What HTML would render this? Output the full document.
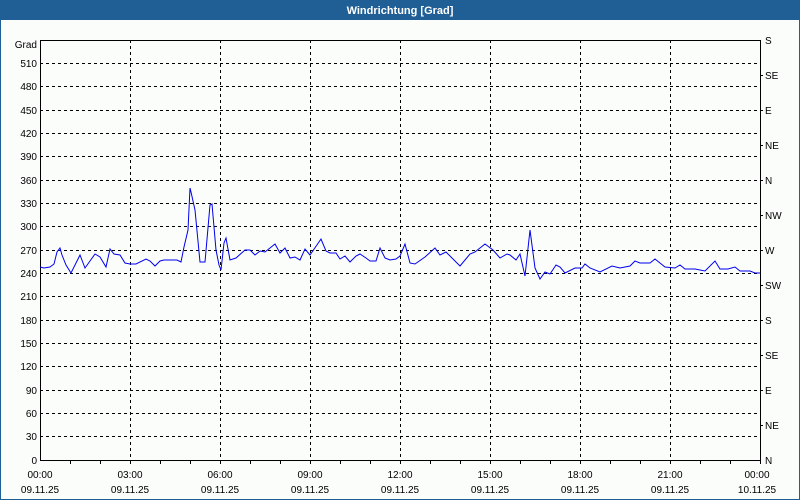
<!DOCTYPE html>
<html><head><style>
html,body{margin:0;padding:0;width:800px;height:500px;overflow:hidden;background:#fbfdfb;font-family:"Liberation Sans",sans-serif;}
</style></head><body>
<svg width="800" height="500" xmlns="http://www.w3.org/2000/svg" font-family="Liberation Sans, sans-serif" font-size="10">
<rect x="0.5" y="0.5" width="799" height="499" fill="#fbfdfb" stroke="#1f5f96"/>
<rect x="0" y="0" width="800" height="20" fill="#1f5f96"/>
<text x="400" y="14" fill="#fff" font-weight="bold" font-size="11" text-anchor="middle">Windrichtung [Grad]</text>
<g stroke="#000" stroke-dasharray="3,3" stroke-width="1">
<line x1="40" x2="760" y1="63.5" y2="63.5"/><line x1="40" x2="760" y1="86.5" y2="86.5"/><line x1="40" x2="760" y1="110.5" y2="110.5"/><line x1="40" x2="760" y1="133.5" y2="133.5"/><line x1="40" x2="760" y1="156.5" y2="156.5"/><line x1="40" x2="760" y1="180.5" y2="180.5"/><line x1="40" x2="760" y1="203.5" y2="203.5"/><line x1="40" x2="760" y1="226.5" y2="226.5"/><line x1="40" x2="760" y1="250.5" y2="250.5"/><line x1="40" x2="760" y1="273.5" y2="273.5"/><line x1="40" x2="760" y1="296.5" y2="296.5"/><line x1="40" x2="760" y1="320.5" y2="320.5"/><line x1="40" x2="760" y1="343.5" y2="343.5"/><line x1="40" x2="760" y1="366.5" y2="366.5"/><line x1="40" x2="760" y1="390.5" y2="390.5"/><line x1="40" x2="760" y1="413.5" y2="413.5"/><line x1="40" x2="760" y1="436.5" y2="436.5"/>
<line x1="130.5" x2="130.5" y1="40" y2="460"/><line x1="220.5" x2="220.5" y1="40" y2="460"/><line x1="310.5" x2="310.5" y1="40" y2="460"/><line x1="400.5" x2="400.5" y1="40" y2="460"/><line x1="490.5" x2="490.5" y1="40" y2="460"/><line x1="580.5" x2="580.5" y1="40" y2="460"/><line x1="670.5" x2="670.5" y1="40" y2="460"/>
</g>
<g stroke="#000" fill="none">
<path d="M40.5 40.5H760.5V460.5H40.5Z"/>
<path d="M70.5 460v4M100.5 460v4M130.5 460v4M160.5 460v4M190.5 460v4M220.5 460v4M250.5 460v4M280.5 460v4M310.5 460v4M340.5 460v4M370.5 460v4M400.5 460v4M430.5 460v4M460.5 460v4M490.5 460v4M520.5 460v4M550.5 460v4M580.5 460v4M610.5 460v4M640.5 460v4M670.5 460v4M700.5 460v4M730.5 460v4M760.5 460v4"/>
<path d="M760 75.5h3M760 110.5h3M760 145.5h3M760 180.5h3M760 215.5h3M760 250.5h3M760 285.5h3M760 320.5h3M760 355.5h3M760 390.5h3M760 425.5h3"/>
</g>
<polyline fill="none" stroke="#0000ee" stroke-width="1" points="40,267 44,268 50,267 54,264 57,252 60,248 62,255 66,265 71,273 80,255 85,268 95,254 100,257 106,267 110,249 114,254 120,255 125,263 130,264 136,264 146,259 150,261 155,266 160,261 164,260 177,260 181,262 184,247 188,230 190,188 191,192 195,210 200,262 205,262 210,205 212,204 216,250 219,265 221,270 224,243 226,238 230,260 236,258 245,250 250,250 255,255 260,251 265,252 270,248 275,244 280,253 285,248 290,258 295,257 300,260 305,249 310,255 321,239 326,251 330,253 336,253 340,259 345,256 350,262 356,256 360,254 366,258 370,261 376,261 380,248 385,258 390,260 396,259 400,256 405,244 410,263 415,264 425,257 435,248 440,255 446,252 460,266 470,254 475,252 485,244 493,250 500,258 507,254 510,255 516,260 520,254 525,276 530,230 535,268 540,279 545,272 550,274 556,265 560,267 565,273 575,268 582,268 585,264 590,268 600,272 612,266 620,268 630,266 635,261 640,263 650,263 655,259 660,263 665,267 675,268 680,265 685,269 695,269 705,271 715,261 720,269 728,269 735,267 740,271 750,271 755,273 760,273"/>
<g fill="#000" text-anchor="end">
<text x="37" y="48">Grad</text>
<text x="37" y="67">510</text><text x="37" y="90">480</text><text x="37" y="114">450</text><text x="37" y="137">420</text><text x="37" y="160">390</text><text x="37" y="184">360</text><text x="37" y="207">330</text><text x="37" y="230">300</text><text x="37" y="254">270</text><text x="37" y="277">240</text><text x="37" y="300">210</text><text x="37" y="324">180</text><text x="37" y="347">150</text><text x="37" y="370">120</text><text x="37" y="394">90</text><text x="37" y="417">60</text><text x="37" y="440">30</text><text x="37" y="464">0</text>
</g>
<g fill="#000">
<text x="765" y="44">S</text><text x="765" y="79">SE</text><text x="765" y="114">E</text><text x="765" y="149">NE</text><text x="765" y="184">N</text><text x="765" y="219">NW</text><text x="765" y="254">W</text><text x="765" y="289">SW</text><text x="765" y="324">S</text><text x="765" y="359">SE</text><text x="765" y="394">E</text><text x="765" y="429">NE</text><text x="765" y="464">N</text>
</g>
<g fill="#000" text-anchor="middle">
<text x="40" y="478">00:00</text><text x="130" y="478">03:00</text><text x="220" y="478">06:00</text><text x="310" y="478">09:00</text><text x="400" y="478">12:00</text><text x="490" y="478">15:00</text><text x="580" y="478">18:00</text><text x="670" y="478">21:00</text><text x="757" y="478">00:00</text>
<text x="40" y="493">09.11.25</text><text x="130" y="493">09.11.25</text><text x="220" y="493">09.11.25</text><text x="310" y="493">09.11.25</text><text x="400" y="493">09.11.25</text><text x="490" y="493">09.11.25</text><text x="580" y="493">09.11.25</text><text x="670" y="493">09.11.25</text><text x="757" y="493">10.11.25</text>
</g>
</svg>
</body></html>
